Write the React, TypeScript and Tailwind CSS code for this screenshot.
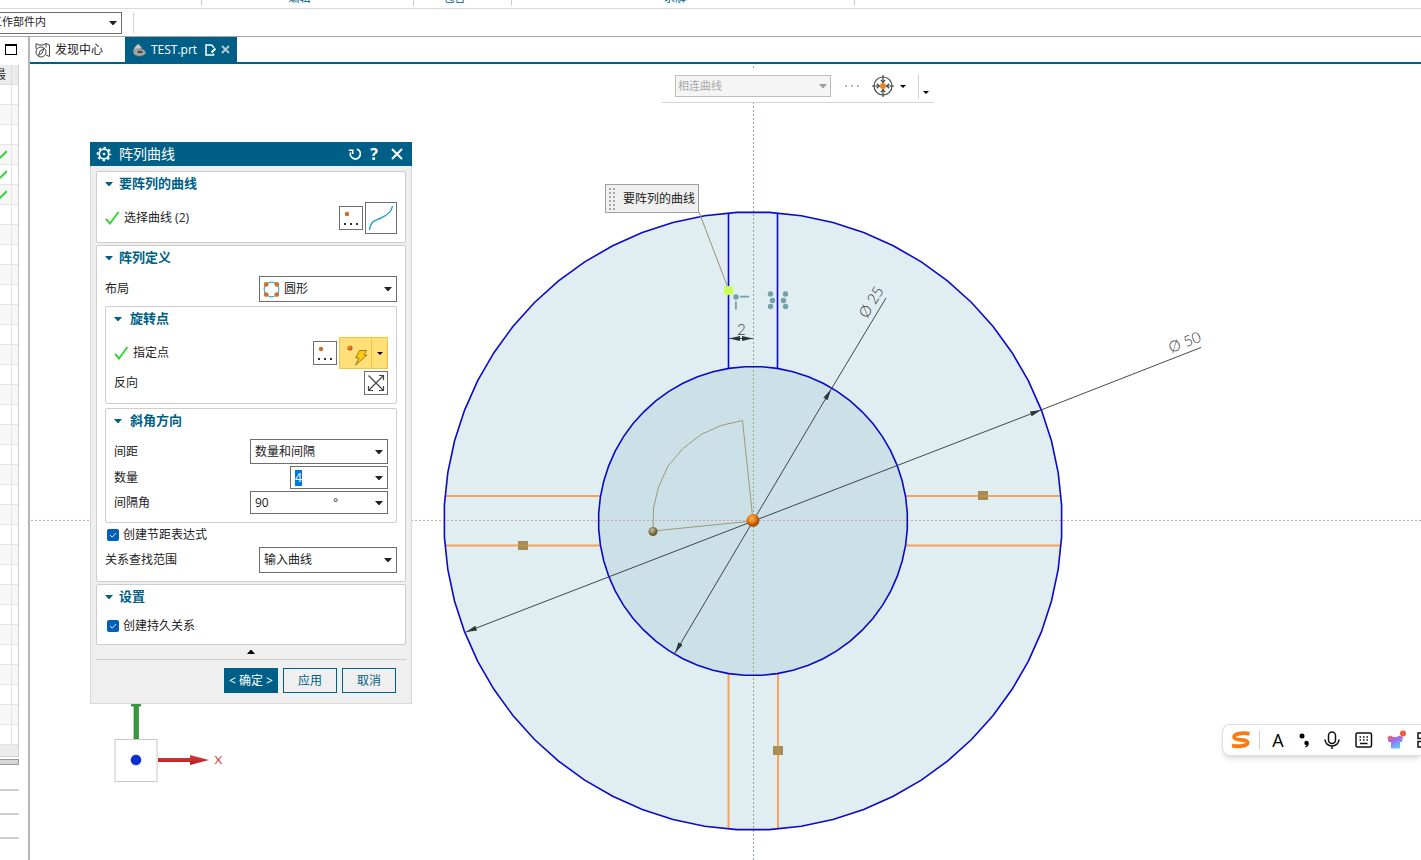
import React, { useEffect, useRef } from 'react';

const CX = 753;
const CY = 521;

/** Circles are tessellated, so they show small facets. */
const ring = (r: number, segments = 60) =>
  Array.from({ length: segments }, (_, i) => {
    const a = ((i + 0.5) / segments) * Math.PI * 2;
    return `${(CX + r * Math.sin(a)).toFixed(1)},${(CY - r * Math.cos(a)).toFixed(1)}`;
  }).join(' ');

const Caret: React.FC<{ className?: string }> = ({ className = '' }) => (
  <svg viewBox="0 0 8 4" className={`h-1 w-2 shrink-0 fill-current ${className}`} aria-hidden="true">
    <path d="M0 0h8L4.5 4h-1z" />
  </svg>
);

const Tick: React.FC = () => (
  <svg viewBox="0 0 15 14" className="h-3.5 w-[15px] shrink-0" aria-hidden="true">
    <path d="M1 8l4 4.5L13.5 1" fill="none" stroke="#37d637" strokeWidth="2" />
  </svg>
);

interface SelectProps {
  id: string;
  value: string;
  className?: string;
  icon?: React.ReactNode;
}

const Select: React.FC<SelectProps> = ({ id, value, className = '', icon }) => (
  <div className={`relative ${className}`}>
    <select
      id={id}
      defaultValue={value}
      className={`h-full w-full appearance-none border border-[#6e6e6e] bg-white text-xs outline-none ${icon ? 'pl-6' : 'pl-1'}`}
    >
      <option>{value}</option>
    </select>
    {icon && <span className="pointer-events-none absolute inset-y-0 left-1 flex items-center">{icon}</span>}
    <Caret className="pointer-events-none absolute top-1/2 right-[5px] -translate-y-1/2" />
  </div>
);

const GroupTitle: React.FC<{ children: React.ReactNode; gap?: string }> = ({ children, gap = 'gap-1.5' }) => (
  <button type="button" aria-expanded="true" className={`flex h-6 items-center text-[13px] font-bold text-[#005f87] ${gap}`}>
    <Caret />
    {children}
  </button>
);

const CheckRow: React.FC<{ id: string; label: string }> = ({ id, label }) => (
  <label htmlFor={id} className="flex h-6 items-center gap-1 pl-0.5">
    <span className="relative flex">
      <input id={id} type="checkbox" defaultChecked className="size-3 appearance-none rounded-xs bg-[#005fb8]" />
      <svg viewBox="0 0 12 12" className="pointer-events-none absolute inset-0 size-3" aria-hidden="true">
        <path d="M3 6l2.2 2.2L9 4" fill="none" stroke="#fff" strokeWidth="0.9" />
      </svg>
    </span>
    {label}
  </label>
);

const PointDialogButton: React.FC = () => (
  <button type="button" aria-label="点" className="size-6 border border-[#6e6e6e] bg-white">
    <svg viewBox="0 0 22 22" className="size-[22px]">
      <circle cx="7" cy="7" r="2.2" fill="#c8702a" />
      <path d="M4 17h2M10 17h2M16 17h2" stroke="#333" strokeWidth="1.8" />
    </svg>
  </button>
);

const CircularIcon = () => (
  <svg viewBox="0 0 17 17" className="size-[17px]" aria-hidden="true">
    <circle cx="8.5" cy="8.5" r="7.3" fill="none" stroke="#3bb3d0" strokeWidth="1.2" />
    <g fill="#c8742c">
      <circle cx="3.2" cy="3.4" r="2.4" />
      <circle cx="13.8" cy="3.4" r="2.4" />
      <circle cx="3.2" cy="13.6" r="2.4" />
      <circle cx="13.8" cy="13.6" r="2.4" />
    </g>
  </svg>
);

const PatternDialog: React.FC = () => {
  const countRef = useRef<HTMLInputElement>(null);

  useEffect(() => {
    countRef.current?.focus();
    countRef.current?.select();
  }, []);

  return (
    <div
      role="dialog"
      aria-labelledby="dlg-title"
      className="absolute top-[78px] left-[60px] w-[322px] border border-t-0 border-[#d8d8d8] bg-[#efefef] text-xs text-[#222]"
    >
      <div className="-mx-px flex h-6 items-center bg-[#005f87] pr-[9px] pl-1.5 text-white">
        <svg viewBox="0 0 16 16" className="size-4" aria-hidden="true">
          <circle cx="8" cy="8" r="4.8" fill="none" stroke="#fff" strokeWidth="1.8" />
          <circle cx="8" cy="8" r="6.4" fill="none" stroke="#fff" strokeWidth="1.8" strokeDasharray="2.500 2.527" strokeDashoffset="1.25" />
          <circle cx="8" cy="8" r="1.3" fill="#fff" />
        </svg>
        <h2 id="dlg-title" className="ml-[7px] flex-1 text-sm leading-6">阵列曲线</h2>
        <button type="button" aria-label="重置" className="mr-1.5">
          <svg viewBox="0 0 14 14" className="size-3.5" fill="none" stroke="#fff" strokeWidth="1.8">
            <path d="M9 2.200A5 5 0 1 1 2.600 5.400" />
            <path d="M0.800 3.200h4v3.800" strokeWidth="1.500" />
          </svg>
        </button>
        <button type="button" className="mr-[11px] w-3 text-base leading-6 font-bold">?</button>
        <button type="button" aria-label="关闭">
          <svg viewBox="0 0 12 12" className="size-3" stroke="#fff" strokeWidth="2">
            <path d="M1 1l10 10M11 1L1 11" />
          </svg>
        </button>
      </div>

      <div className="flex flex-col gap-0.5 px-[5px] pt-[5px]">
        <section className="rounded-xs border border-[#cdcdcd] bg-white px-2 pb-2">
          <GroupTitle>要阵列的曲线</GroupTitle>
          <div className="mt-1.5 flex h-8 items-center">
            <Tick />
            <span className="ml-1 flex-1">选择曲线 (2)</span>
            <PointDialogButton />
            <button type="button" aria-label="曲线" className="ml-0.5 size-8 border border-[#6e6e6e] bg-white">
              <svg viewBox="0 0 30 30" className="size-[30px]" fill="none" stroke="#1ea0c0" strokeWidth="1.4">
                <path d="M3.500 27C4.500 18 9 17.500 14 15.500C20 13 25.500 10 26.500 3" />
              </svg>
            </button>
          </div>
        </section>

        <section className="rounded-xs border border-[#cdcdcd] bg-white px-2 pb-2">
          <GroupTitle>阵列定义</GroupTitle>
          <div className="mt-1.5 flex items-center justify-between">
            <label htmlFor="layout">布局</label>
            <Select id="layout" value="圆形" className="h-[26px] w-[138px]" icon={<CircularIcon />} />
          </div>

          <div className="mt-1 rounded-xs border border-[#cdcdcd] px-2 pb-2">
            <GroupTitle gap="gap-2">旋转点</GroupTitle>
            <div className="mt-1.5 flex h-8 items-center">
              <Tick />
              <span className="ml-1 flex-1">指定点</span>
              <PointDialogButton />
              <div className="ml-0.5 flex h-8 border border-[#f2c443] bg-[#ffe078]">
                <button type="button" aria-label="自动判断的点" className="w-[31px]">
                  <svg viewBox="0 0 31 30" className="h-[30px] w-[31px]">
                    <circle cx="10" cy="10" r="2.6" fill="#d0641c" />
                    <circle cx="9.4" cy="9.3" r="1" fill="#ff9a4a" />
                    <path d="M19.500 12.500h7l-2.500 4.500h3L15.500 27l3.500-7h-3.400z" fill="#ffc90e" stroke="#8a7420" strokeWidth="0.9" />
                  </svg>
                </button>
                <button type="button" aria-label="点类型" className="flex w-4 items-center justify-center border-l border-[#f2c443]">
                  <svg viewBox="0 0 6 3" className="h-[3px] w-1.5"><path d="M0 0h6L3 3z" /></svg>
                </button>
              </div>
            </div>
            <div className="mt-0.5 flex h-6 items-center justify-between">
              <span>反向</span>
              <button type="button" aria-label="反向" className="size-6 border border-[#6e6e6e] bg-white">
                <svg viewBox="0 0 22 22" className="size-[22px]" fill="none" stroke="#444" strokeWidth="1.2">
                  <path d="M3.500 3.500l15 15M3.500 18.500l15-15" />
                  <path d="M14 3.500h4.500V8M3.500 14v4.500H8M14 18.500h4.500V14" />
                </svg>
              </button>
            </div>
          </div>

          <div className="mt-1 rounded-xs border border-[#cdcdcd] px-2 pb-2">
            <GroupTitle gap="gap-2">斜角方向</GroupTitle>
            <div className="mt-1.5 flex flex-col gap-0.5">
              <div className="flex items-center justify-between">
                <label htmlFor="spacing">间距</label>
                <Select id="spacing" value="数量和间隔" className="h-[25px] w-[138px]" />
              </div>
              <div className="flex items-center justify-between">
                <label htmlFor="count">数量</label>
                <div className="flex h-[23px] w-[98px] items-center border border-[#6e6e6e] bg-white px-1">
                  <input
                    ref={countRef}
                    id="count"
                    defaultValue="4"
                    className="min-w-0 flex-1 outline-none selection:bg-[#0078d7] selection:text-white"
                  />
                  <Caret />
                </div>
              </div>
              <div className="flex items-center justify-between">
                <label htmlFor="angle">间隔角</label>
                <div className="flex h-[23px] w-[138px] items-center border border-[#6e6e6e] bg-white px-1">
                  <input id="angle" defaultValue="90" className="min-w-0 flex-1 outline-none" />
                  <span className="w-[42px]">°</span>
                  <Caret />
                </div>
              </div>
            </div>
          </div>

          <CheckRow id="pitch" label="创建节距表达式" />
          <div className="flex items-center justify-between">
            <label htmlFor="scope">关系查找范围</label>
            <Select id="scope" value="输入曲线" className="h-[26px] w-[138px]" />
          </div>
        </section>

        <section className="rounded-xs border border-[#cdcdcd] bg-white px-2 pb-1.5">
          <GroupTitle>设置</GroupTitle>
          <div className="mt-[5px]">
            <CheckRow id="persist" label="创建持久关系" />
          </div>
        </section>
      </div>

      <div className="mx-[5px] flex h-[15px] items-center justify-center border-b border-[#cdcdcd]">
        <button type="button" aria-label="更少" className="flex">
          <Caret className="rotate-180 text-black" />
        </button>
      </div>
      <div className="flex justify-end gap-[5px] px-[15px] pt-2 pb-2.5 text-[#005f87]">
        <button type="button" className="h-[25px] w-[54px] border border-[#005f87] bg-[#005f87] whitespace-nowrap text-white">&lt; 确定 &gt;</button>
        <button type="button" className="h-[25px] w-[54px] border border-[#005f87]">应用</button>
        <button type="button" className="h-[25px] w-[54px] border border-[#005f87]">取消</button>
      </div>
    </div>
  );
};

const SketchView: React.FC = () => (
  <svg className="absolute inset-0 h-full w-full" aria-hidden="true">
    <defs>
      <marker id="arrow" viewBox="0 0 11 6" refX="11" refY="3" markerWidth="11" markerHeight="6" markerUnits="userSpaceOnUse" orient="auto-start-reverse">
        <path d="M0 0.500L11 3L0 5.500z" fill="#2c3538" />
      </marker>
      <radialGradient id="orb" cx="0.4" cy="0.35">
        <stop offset="0" stopColor="#ffb050" />
        <stop offset="0.6" stopColor="#f08018" />
        <stop offset="1" stopColor="#a8560c" />
      </radialGradient>
      <radialGradient id="handle" cx="0.4" cy="0.35">
        <stop offset="0" stopColor="#d0c39a" />
        <stop offset="1" stopColor="#6b5f38" />
      </radialGradient>
      <linearGradient id="shaft" x1="0" y1="0" x2="0" y2="1">
        <stop offset="0" stopColor="#e04040" />
        <stop offset="1" stopColor="#a81c1c" />
      </linearGradient>
    </defs>
    {/* the view starts right of the navigator and below the tab strip */}
    <g transform="translate(-30 -64)">
      <polygon points={ring(309)} fill="#e0edf1" />
      <polygon points={ring(154.5)} fill="#cbe1e7" />

      <path d="M31 520.500H2400" stroke="#d9a0ac" strokeDasharray="2 2" />
      <path d="M753.500 66V1600" stroke="#8fa88f" strokeDasharray="2 2" />

      <g stroke="#f5a35c" strokeWidth="2">
        <path d="M445 496H600M445 545.500H600M906 496H1061M906 545.500H1061" />
        <path d="M728.500 674V828M778 674V828" />
      </g>
      <g fill="#a58d55">
        <rect x="518" y="541" width="10" height="9" />
        <rect x="978" y="491" width="10" height="9" />
        <rect x="773" y="746" width="10" height="9" />
      </g>
      <path d="M518 545.500h10M978 496h10M778 746v9" stroke="#c8954f" />

      <g fill="none" stroke="#0a0ac8" strokeWidth="1.6">
        <polygon points={ring(309)} />
        <polygon points={ring(154.5)} />
        <path d="M728.500 213V368M777.500 213V368" />
      </g>

      <g stroke="#2c3538" strokeWidth="0.9">
        <path d="M466 632L1041 410" markerStart="url(#arrow)" markerEnd="url(#arrow)" />
        <path d="M1041 410L1201 347.500" />
        <path d="M675 653L831 389.500" markerStart="url(#arrow)" markerEnd="url(#arrow)" />
        <path d="M831 389.500L886 298" />
        <path d="M729 338.500H753" markerStart="url(#arrow)" markerEnd="url(#arrow)" />
      </g>
      <g className="fill-[#333] text-[15px] font-light" style={{ fontFamily: 'Lato, sans-serif' }}>
        <text transform="translate(1171 353) rotate(-21)">Ø 50</text>
        <text transform="translate(867 319) rotate(-59)">Ø 25</text>
        <text x="737" y="335">2</text>
      </g>

      <g fill="none" stroke="#9c9a78">
        <path d="M753 521L742.500 420.500L721 425.500L701 434.500L682.500 449L668 466L658.500 487L653.500 508L653 531Z" />
        <path d="M699 212L728 288" stroke="#9a8f70" />
      </g>
      <circle cx="653" cy="531.500" r="4.500" fill="url(#handle)" />
      <circle cx="753" cy="520.500" r="6.500" fill="url(#orb)" />

      <rect x="724" y="286" width="9" height="9" fill="#ccff55" />
      <g fill="#76a0a8">
        <circle cx="736" cy="297" r="2.7" />
        <path d="M740 295.800h9v1.800h-9zM735 301.500h1.800v8H735z" />
        <circle cx="770.5" cy="294" r="2.7" />
        <circle cx="772.5" cy="300.5" r="2.7" />
        <circle cx="770.5" cy="306.5" r="2.7" />
        <circle cx="785.5" cy="294" r="2.7" />
        <circle cx="783.5" cy="300.5" r="2.7" />
        <circle cx="785.5" cy="306.5" r="2.7" />
      </g>

      {/* orientation triad */}
      <path d="M134 739V706h-3l5-12l5 12h-2.500V739z" fill="#389a3c" stroke="#24732a" strokeWidth="0.6" />
      <path d="M158 758h32v-3l19 5l-19 5v-3h-32z" fill="url(#shaft)" />
      <rect x="115" y="739.500" width="42" height="42" fill="#fff" stroke="#c9c9c9" />
      <circle cx="136" cy="760" r="5" fill="#0a2fd8" stroke="#0a2090" strokeWidth="0.6" />
      <text x="214.500" y="764" className="fill-[#d04848] text-xs" style={{ fontFamily: 'Lato, sans-serif' }}>X</text>
    </g>
  </svg>
);

const SelectionBar: React.FC = () => (
  <div className="absolute top-1.5 left-[632px] flex h-[33px] w-[272px] items-center border-b border-[#d4d4d4] bg-white pl-[13px]">
    <div className="relative h-[22px] w-[156px]">
      <select disabled aria-label="曲线规则" className="h-full w-full appearance-none border border-[#bdbdbd] bg-[#f5f5f5] pl-0.5 text-[11px] text-[#a8a8a8] opacity-100">
        <option>相连曲线</option>
      </select>
      <Caret className="pointer-events-none absolute top-1/2 right-1 -translate-y-1/2 text-[#a0a0a0]" />
    </div>
    <svg viewBox="0 0 14 2" className="ml-3.5 h-0.5 w-3.5 fill-[#b5b5b5]" aria-hidden="true">
      <path d="M0 0h2v2H0zM6 0h2v2H6zM12 0h2v2h-2z" />
    </svg>
    <button type="button" aria-label="捕捉点" className="ml-3 flex items-center gap-[5px]">
      <svg viewBox="0 0 24 24" className="size-6" fill="none" stroke="#444" strokeWidth="1.2">
        <circle cx="12" cy="12" r="9" />
        <path d="M12 1v7.500M12 15.500v7.500M1 12h7.500M15.500 12h7.500" />
        <path d="M9.800 5.800l2.200 2.500L14.200 5.800M9.800 18.200l2.200-2.500L14.200 18.200M5.800 9.800l2.500 2.200L5.800 14.200M18.200 9.800l-2.500 2.200L18.200 14.200" />
        <circle cx="12" cy="12" r="3" fill="#ee8020" stroke="none" />
      </svg>
      <svg viewBox="0 0 6 3" className="h-[3px] w-1.5"><path d="M0 0h6L3 3z" /></svg>
    </button>
    <div className="ml-3 h-[25px] border-l border-[#d0d0d0]" />
    <button type="button" aria-label="更多" className="mt-3 ml-1">
      <svg viewBox="0 0 6 3" className="h-[3px] w-1.5"><path d="M0 0h6L3 3z" /></svg>
    </button>
  </div>
);

const ImeBar: React.FC = () => (
  <div className="absolute top-[660px] right-0 flex h-8 w-[199px] items-center overflow-hidden rounded-l-lg border border-r-0 border-[#dedede] bg-white pl-2 text-black shadow-md">
    <svg viewBox="0 0 20 18" className="h-[18px] w-5 shrink-0" aria-hidden="true">
      <path d="M18.500 2.800C11 1.200 3 3 3.200 6.300C3.500 9.800 16.500 8 16.700 11.300C16.800 15 8 16 1 14.700" fill="none" stroke="#ff7a0e" strokeWidth="3.8" />
    </svg>
    <div className="ml-2 h-[18px] shrink-0 border-l border-[#cfcfcf]" />
    <button type="button" className="ml-2.5 w-4 shrink-0 text-lg leading-5">A</button>
    <button type="button" aria-label="中文标点" className="ml-3 shrink-0">
      <svg viewBox="0 0 12 16" className="h-4 w-3">
        <circle cx="4" cy="4" r="2.5" />
        <circle cx="8.5" cy="11" r="2.2" />
        <path d="M10.700 11q0 3.500-3 4.500l-.5-1q1.500-.8 1.800-2.500z" />
      </svg>
    </button>
    <button type="button" aria-label="语音" className="ml-3.5 shrink-0">
      <svg viewBox="0 0 16 18" className="h-[18px] w-4" fill="none" stroke="#111" strokeWidth="1.5">
        <rect x="4.5" y="1" width="7" height="11.5" rx="3.5" />
        <path d="M1 8.500a7 6.500 0 0 0 14 0M8 15v3" />
      </svg>
    </button>
    <button type="button" aria-label="键盘" className="ml-[15px] shrink-0">
      <svg viewBox="0 0 18 16" className="h-4 w-[18px]" fill="none" stroke="#111" strokeWidth="1.5">
        <rect x="1" y="1" width="15.5" height="14" rx="1.5" />
        <path d="M4.500 5h1.500M8 5h1.500M11.500 5h1.500M4.500 8h1.500M8 8h1.500M11.500 8h1.500M5 11.500h7.500" />
      </svg>
    </button>
    <button type="button" aria-label="皮肤" className="ml-3.5 shrink-0">
      <svg viewBox="0 0 20 20" className="size-5">
        <defs>
          <linearGradient id="skin" x1="0" y1="0" x2="0.6" y2="1">
            <stop offset="0" stopColor="#ff5a4a" />
            <stop offset="0.45" stopColor="#a06cf0" />
            <stop offset="1" stopColor="#5cc8f8" />
          </linearGradient>
        </defs>
        <path d="M3.500 5.500q4.500 3.500 9 0l3.500 1.500-1 5h-2v6.500H4V12H1.500L0.500 7z" fill="url(#skin)" />
        <circle cx="16" cy="3.500" r="3" fill="#f55a3c" />
      </svg>
    </button>
    <button type="button" aria-label="工具箱" className="ml-2.5 shrink-0">
      <svg viewBox="0 0 16 16" className="size-4" fill="none" stroke="#111" strokeWidth="1.5">
        <path d="M1 1h5.500v5.500H1zM1 9.500h5.500V15H1zM9.500 9.500H15V15H9.500zM9.500 1H15v5.500H9.500z" />
      </svg>
    </button>
  </div>
);

const Navigator: React.FC = () => (
  <aside className="flex w-[30px] shrink-0 flex-col border-r-2 border-[#b4b4b4]">
    <div className="h-7 pt-[7px] pl-[5px]">
      <button type="button" aria-label="最大化" className="block h-[11px] w-3 border border-t-2 border-black" />
    </div>
    <table className="w-[19px] table-fixed border-separate border-spacing-0 border-r border-[#cfcfcf] text-xs">
      <thead>
        <tr className="h-5 bg-[#ececec]">
          <th className="w-3 border-r border-b border-[#dcdcdc] p-0 font-normal">
            <div className="flex w-1.5 justify-end leading-[19px] whitespace-nowrap">最</div>
          </th>
          <th className="border-b border-[#dcdcdc] p-0" />
        </tr>
      </thead>
      <tbody>
        {Array.from({ length: 33 }).map((_, i) => (
          <tr key={i} className={i % 2 ? 'h-5 bg-[#f7f7f7]' : 'h-5'}>
            <td className="border-r border-b border-[#e4e4e4] p-0">
              {i >= 3 && i <= 5 && (
                <svg viewBox="0 0 7 9" className="block h-[9px] w-[7px]"><path d="M0 8L7 1" stroke="#37d637" strokeWidth="2" /></svg>
              )}
            </td>
            <td className="border-b border-[#e4e4e4] p-0" />
          </tr>
        ))}
      </tbody>
    </table>
    <div className="h-3 w-[19px] border-r border-b border-[#cfcfcf] bg-[#ececec]" />
    <div className="mt-0.5 h-1.5 w-[19px] border border-l-0 border-[#9a9a9a] bg-[#d6d6d6]" />
    <div className="h-[26px] w-[19px] shrink-0 border-b-2 border-[#cfcfcf]" />
    <div className="h-6 w-[19px] shrink-0 border-b-2 border-[#cfcfcf]" />
    <div className="h-6 w-[19px] shrink-0 border-b-2 border-[#cfcfcf]" />
  </aside>
);

export default function App() {
  return (
    <div
      className="flex h-screen flex-col overflow-hidden bg-white text-xs text-[#222]"
      style={{ fontFamily: '"Open Sans", "Noto Sans CJK SC", sans-serif' }}
    >
      {/* bottom edge of the ribbon, group captions run off the top */}
      <div className="flex h-[9px] shrink-0 overflow-hidden border-b border-[#d9d9d9] text-[11px] leading-4 text-[#005f87]">
        <div className="h-1.5 w-[202px] border-r border-[#cfcfcf]" />
        <div className="flex h-1.5 w-[212px] items-end justify-center border-r border-[#cfcfcf] pr-4">编辑</div>
        <div className="flex h-1.5 w-[98px] items-end justify-center border-r border-[#cfcfcf] pr-4">包含</div>
        <div className="flex h-1.5 w-[343px] items-end justify-center border-r border-[#cfcfcf] pr-4">求解</div>
      </div>
      <div className="flex h-7 shrink-0 items-center gap-[11px] border-b border-[#a8a8a8]">
        <div className="relative -ml-2.5 h-[22px] w-[132px]">
          <select aria-label="选择范围" className="h-full w-full appearance-none border border-[#6e6e6e] bg-white text-[11px]">
            <option>工作部件内</option>
          </select>
          <Caret className="pointer-events-none absolute top-1/2 right-[5px] -translate-y-1/2" />
        </div>
        <div className="h-5 border-l border-[#d0d0d0]" />
      </div>

      <div className="flex min-h-0 flex-1">
        <Navigator />
        <main className="flex min-w-0 flex-1 flex-col">
          <nav className="flex h-[27px] shrink-0 border-b-2 border-[#005f87]">
            <a href="#discovery" className="flex w-[95px] items-center gap-1 pl-[5px]">
              <svg viewBox="0 0 16 16" className="size-4" fill="none" stroke="#444" aria-hidden="true">
                <path d="M1 7V1.500l3 1.500h4l3-1.500v4M11 1.500l3.500 1.500v11.500L11 13" />
                <circle cx="6" cy="10" r="5" />
                <path d="M9 6.500L7 11l-3.500 2.500L5 9z" />
              </svg>
              发现中心
            </a>
            <a href="#test" className="flex w-28 items-center bg-[#005f87] pl-[7px] text-white">
              <svg viewBox="0 0 14 14" className="size-3.5" aria-hidden="true">
                <path d="M1 8Q4 1 6.500 1q3 2 3.500 6l-4 3z" fill="#c9c9c9" stroke="#777" strokeWidth="0.6" />
                <ellipse cx="7.5" cy="9.5" rx="6.2" ry="3.7" fill="#a6a6a6" stroke="#666" strokeWidth="0.6" />
                <ellipse cx="8" cy="9" rx="2.8" ry="1.3" fill="#444" />
              </svg>
              <span className="mr-2 ml-[5px]">TEST.prt</span>
              <svg viewBox="0 0 11 12" className="h-3 w-[11px]" fill="none" stroke="#fff" strokeWidth="1.5" aria-hidden="true">
                <path d="M8.500 4V3L6.500 1H1v10h7.500V9.500" />
                <path d="M10.500 4.500L6.500 8.500" strokeWidth="2" />
              </svg>
              <svg viewBox="0 0 9 9" className="ml-[5px] size-[9px]" stroke="#b9ccd6" strokeWidth="1.8" aria-hidden="true">
                <path d="M1 1l7 7M8 1L1 8" />
              </svg>
            </a>
          </nav>
          <div className="relative min-h-0 flex-1 overflow-hidden">
            <SketchView />
            <SelectionBar />
            <div className="absolute top-[120px] left-[575px] flex h-[29px] w-[94px] items-center justify-between border border-[#a0a0a0] bg-[#f0f0f0] px-[3px]">
              <svg viewBox="0 0 6 22" className="h-[22px] w-1.5" aria-hidden="true">
                <path d="M1 0v22M5 0v22" stroke="#a8a8a8" strokeWidth="2" strokeDasharray="2 2" />
              </svg>
              要阵列的曲线
            </div>
            <PatternDialog />
            <ImeBar />
          </div>
        </main>
      </div>
    </div>
  );
}
